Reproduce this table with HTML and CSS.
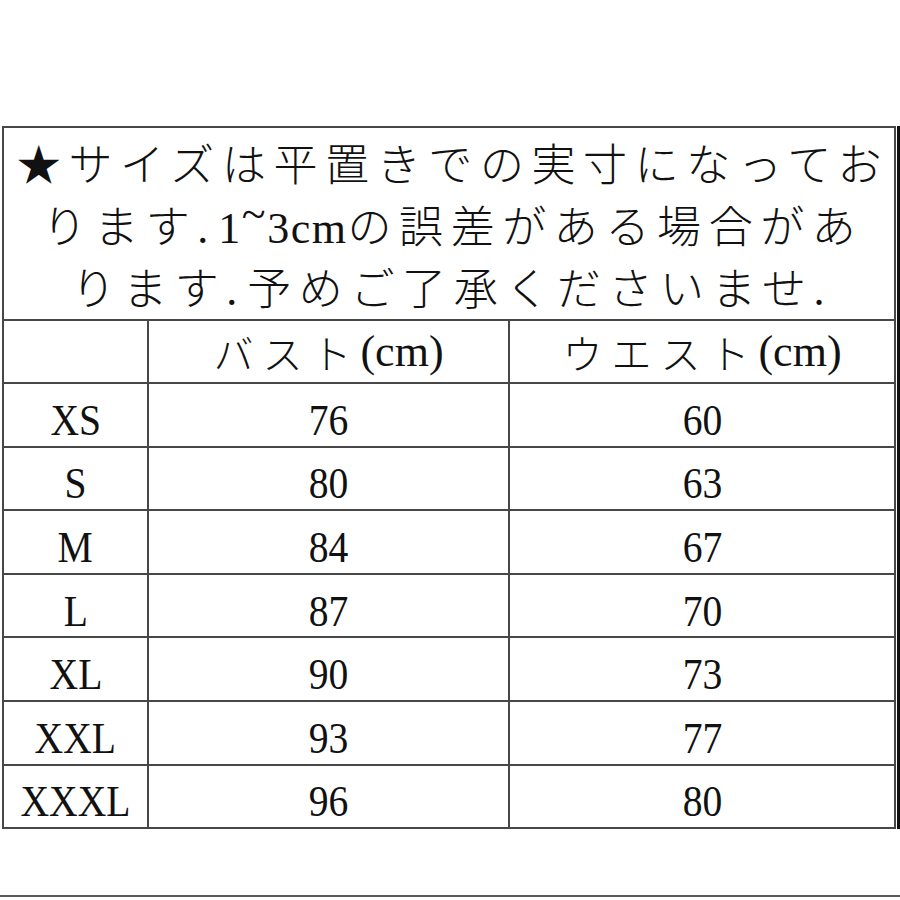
FILE: index.html
```html
<!DOCTYPE html>
<html lang="ja">
<head>
<meta charset="utf-8">
<title>サイズ表</title>
<link rel="stylesheet" href="styles.css">
</head>
<body>
<div class="frame">
  <div class="sheet">
    <div class="notice">
      <span class="line">★サイズは平置きでの実寸になってお</span>
      <span class="line">ります<span class="dot">.</span><span class="hw">1<span class="tilde">~</span>3cm</span>の誤差がある場合があ</span>
      <span class="line">ります<span class="dot">.</span>予めご了承くださいませ<span class="dot">.</span></span>
    </div>

    <div class="cell"></div>
    <div class="cell head"><span class="kana">バスト</span><span class="unit">(cm)</span></div>
    <div class="cell head"><span class="kana">ウエスト</span><span class="unit">(cm)</span></div>

    <div class="cell data"><span class="t">XS</span></div>
    <div class="cell data"><span class="t">76</span></div>
    <div class="cell data"><span class="t">60</span></div>

    <div class="cell data"><span class="t">S</span></div>
    <div class="cell data"><span class="t">80</span></div>
    <div class="cell data"><span class="t">63</span></div>

    <div class="cell data"><span class="t">M</span></div>
    <div class="cell data"><span class="t">84</span></div>
    <div class="cell data"><span class="t">67</span></div>

    <div class="cell data"><span class="t">L</span></div>
    <div class="cell data"><span class="t">87</span></div>
    <div class="cell data"><span class="t">70</span></div>

    <div class="cell data"><span class="t">XL</span></div>
    <div class="cell data"><span class="t">90</span></div>
    <div class="cell data"><span class="t">73</span></div>

    <div class="cell data"><span class="t">XXL</span></div>
    <div class="cell data"><span class="t">93</span></div>
    <div class="cell data"><span class="t">77</span></div>

    <div class="cell data"><span class="t">XXXL</span></div>
    <div class="cell data"><span class="t">96</span></div>
    <div class="cell data"><span class="t">80</span></div>
  </div>
</div>
<div class="rule"></div>
</body>
</html>
```

FILE: styles.css
```css
html, body {
  margin: 0;
  padding: 0;
  background: #ffffff;
}

body {
  width: 900px;
  height: 900px;
  overflow: hidden;
  font-family: "Liberation Serif", "Noto Sans CJK JP", serif;
  color: #111111;
}

.frame {
  margin-top: 126px;
  margin-left: 2px;
  width: 895px;
  display: flex;
  border-right: 3px solid #111;
}

.sheet {
  display: grid;
  grid-template-columns: 143px 359px 384px;
  grid-template-rows: 191px 61px repeat(7, 61.6px);
  gap: 2px;
  padding: 2px;
  background: #474747;
  width: 890px;
  margin-right: 1px;
}

.cell {
  background: #ffffff;
  display: flex;
  align-items: center;
  justify-content: center;
}

.notice {
  grid-column: 1 / 4;
  background: #ffffff;
  display: flex;
  flex-direction: column;
  align-items: center;
  padding-top: 8px;
  padding-left: 8px;
  font-size: 44px;
  font-weight: 300;
  line-height: 62px;
  letter-spacing: 7.6px;
  white-space: nowrap;
}

.line {
  display: block;
}

.dot {
  letter-spacing: 10px;
}

.hw {
  letter-spacing: 1.5px;
}

.tilde {
  display: inline-block;
  transform: translateY(-14px);
}

.head {
  font-size: 40px;
}

.kana {
  font-family: "Noto Sans CJK JP", sans-serif;
  font-weight: 300;
  letter-spacing: 9px;
}

.unit {
  font-family: "Liberation Serif", serif;
  font-size: 44px;
}

.data {
  font-size: 45px;
  padding-top: 10px;
  box-sizing: border-box;
}

.t {
  display: inline-block;
  transform: scaleX(0.88);
}

.rule {
  margin-top: 66px;
  height: 2px;
  background: #5a5a5a;
}
```
